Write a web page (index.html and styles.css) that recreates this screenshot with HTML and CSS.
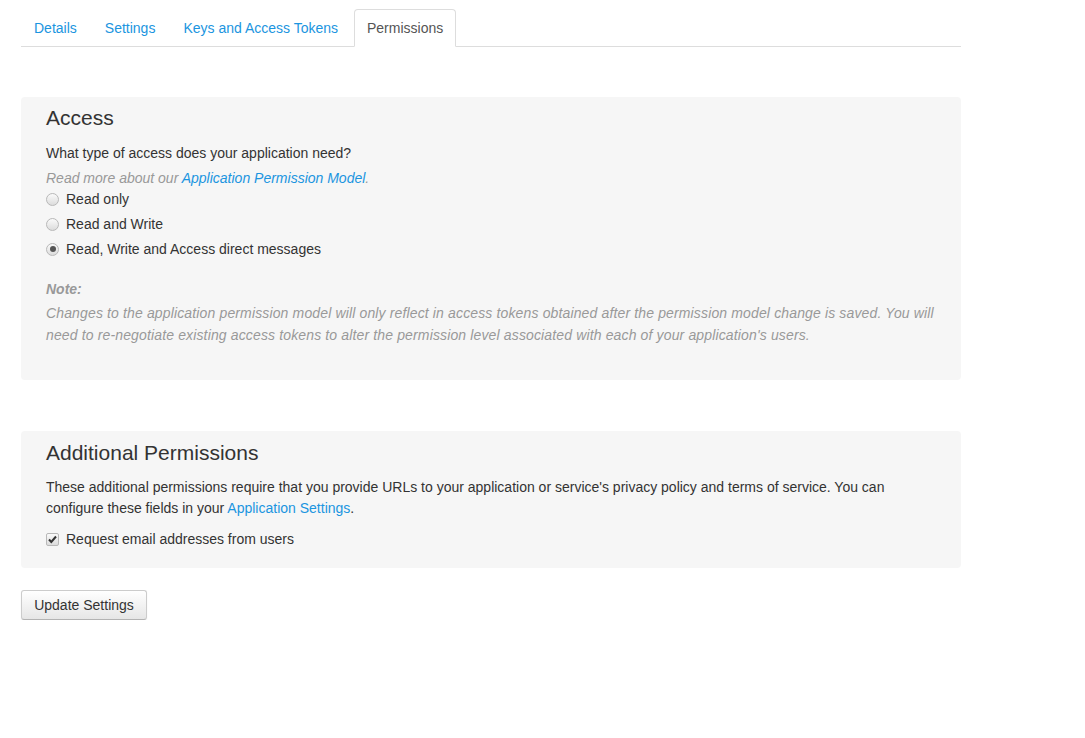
FILE: index.html
```html
<!DOCTYPE html>
<html lang="en">
<head>
  <meta charset="UTF-8" />
  <title>Permissions</title>
  <link rel="stylesheet" href="styles.css">
</head>
<body>
  <div class="page">
    <ul class="tabs">
      <li><a href="#">Details</a></li>
      <li><a href="#">Settings</a></li>
      <li><a href="#">Keys and Access Tokens</a></li>
      <li class="active"><a href="#">Permissions</a></li>
    </ul>

    <div class="well well-access">
      <h3>Access</h3>
      <p class="question">What type of access does your application need?</p>
      <p class="hint">Read more about our <a href="#">Application Permission Model</a>.</p>
      <label class="choice"><span class="radio"></span>Read only</label>
      <label class="choice"><span class="radio"></span>Read and Write</label>
      <label class="choice"><span class="radio checked"></span>Read, Write and Access direct messages</label>

      <p class="note-title">Note:</p>
      <p class="note">Changes to the application permission model will only reflect in access tokens obtained after the permission model change is saved. You will need to re-negotiate existing access tokens to alter the permission level associated with each of your application's users.</p>
    </div>

    <div class="well well-extra">
      <h3>Additional Permissions</h3>
      <p class="desc">These additional permissions require that you provide URLs to your application or service's privacy policy and terms of service. You can configure these fields in your <a href="#">Application Settings</a>.</p>
      <label class="choice">
        <span class="checkbox">
          <svg width="11" height="11" viewBox="0 0 11 11"><path d="M2 5.5 L4.3 8 L9 2.5" fill="none" stroke="#333" stroke-width="2"/></svg>
        </span>Request email addresses from users
      </label>
    </div>

    <button class="btn">Update Settings</button>
  </div>
</body>
</html>
```

FILE: styles.css
```css
html, body {
  margin: 0;
  padding: 0;
  background: #fff;
}

body {
  font-family: "Liberation Sans", Arial, sans-serif;
  font-size: 14px;
  line-height: 20px;
  color: #333;
}

a {
  color: #1b95e0;
  text-decoration: none;
}

.page {
  width: 940px;
  padding: 9px 0 0 21px;
}

/* Tabs */
.tabs {
  display: flex;
  margin: 0;
  padding: 0;
  list-style: none;
  border-bottom: 1px solid #ddd;
}

.tabs li {
  margin-right: 2px;
  margin-bottom: -1px;
}

.tabs a {
  display: block;
  padding: 9px 12px;
  line-height: 18px;
  border: 1px solid transparent;
  border-radius: 4px 4px 0 0;
  color: #1b95e0;
}

.tabs .active {
  margin-left: 1px;
}

.tabs .active a {
  color: #555;
  background: #fff;
  border-color: #ddd;
  border-bottom-color: #fff;
}

/* Wells */
.well {
  background: #f6f6f6;
  border-radius: 4px;
  padding: 0 25px;
}

.well h3 {
  margin: 0;
  font-size: 21px;
  font-weight: normal;
  line-height: 30px;
  color: #333;
}

.well p {
  margin: 0;
}

.well-access {
  margin-top: 50px;
  padding-top: 6px;
  padding-bottom: 34px;
}

.well-access h3 {
  margin-bottom: 10px;
}

.question {
  margin-bottom: 5px !important;
}

.hint {
  font-style: italic;
  color: #999;
  margin-bottom: 1px !important;
}

.choice {
  display: flex;
  align-items: center;
  height: 20px;
  margin-bottom: 5px;
  cursor: pointer;
}

.radio {
  position: relative;
  box-sizing: border-box;
  width: 13px;
  height: 13px;
  margin: 0 7px 0 0;
  border: 1px solid #b8b8b8;
  border-radius: 50%;
  background: linear-gradient(#fafafa, #dcdcdc);
}

.radio.checked::after {
  content: "";
  position: absolute;
  top: 2.5px;
  left: 2.5px;
  width: 6px;
  height: 6px;
  border-radius: 50%;
  background: #555;
}

.checkbox {
  display: flex;
  box-sizing: border-box;
  width: 13px;
  height: 13px;
  margin: 0 7px 0 0;
  border: 1px solid #b8b8b8;
  border-radius: 2px;
  background: linear-gradient(#fafafa, #dcdcdc);
}

.note-title {
  margin-top: 20px !important;
  font-weight: bold;
  font-style: italic;
  color: #999;
}

.note {
  margin-top: 3px !important;
  font-style: italic;
  line-height: 22px;
  letter-spacing: 0.14px;
  color: #999;
}

.well-extra {
  margin-top: 51px;
  padding-top: 7px;
  padding-bottom: 14px;
}

.well-extra h3 {
  margin-bottom: 9px;
}

.desc {
  line-height: 21px;
  margin-bottom: 10px !important;
}

/* Button */
.btn {
  margin-top: 22px;
  height: 30px;
  width: 126px;
  padding: 0 12px;
  font-family: "Liberation Sans", Arial, sans-serif;
  font-size: 14px;
  color: #333;
  background: linear-gradient(#fff, #e6e6e6);
  border: 1px solid #ccc;
  border-bottom-color: #b3b3b3;
  border-radius: 3px;
  box-shadow: inset 0 1px 0 rgba(255,255,255,0.2), 0 1px 2px rgba(0,0,0,0.05);
  cursor: pointer;
}
```
